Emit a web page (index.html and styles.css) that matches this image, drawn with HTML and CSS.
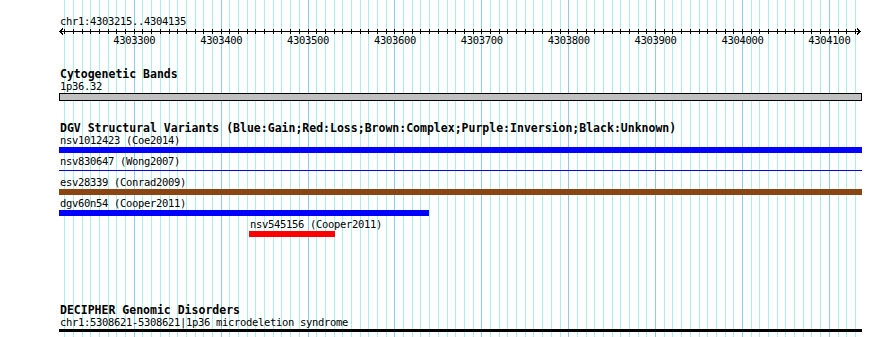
FILE: index.html
```html
<!DOCTYPE html>
<html lang="en">
<head>
<meta charset="utf-8">
<title>Genome browser</title>
<link rel="stylesheet" href="styles.css">
</head>
<body>
<div class="browser">
  <div class="grid" id="grid"></div>

  <section class="ruler">
    <div class="pos">chr1:4303215..4304135</div>
    <svg class="axis" id="axis" width="803" height="8" viewBox="0 0 803 8">
      <path class="axis-line" d="M1 4.5H801M4 1.5L1 4.5L4 7.5M798 1.5L801 4.5L798 7.5"/>
      <path class="axis-ticks" id="ticks" d=""/>
    </svg>
    <div class="ticklabels" id="ticklabels"></div>
  </section>

  <section class="track cyto">
    <h2 class="track-title">Cytogenetic Bands</h2>
    <div class="feat-label">1p36.32</div>
    <div class="band"></div>
  </section>

  <section class="track dgv">
    <h2 class="track-title">DGV Structural Variants (Blue:Gain;Red:Loss;Brown:Complex;Purple:Inversion;Black:Unknown)</h2>
    <div class="item">
      <div class="feat-label">nsv1012423 (Coe2014)</div>
      <div class="bar-row"><div class="bar gain full"></div></div>
    </div>
    <div class="item">
      <div class="feat-label">nsv830647 (Wong2007)</div>
      <div class="bar-row"><div class="bar gain full thin"></div></div>
    </div>
    <div class="item">
      <div class="feat-label">esv28339 (Conrad2009)</div>
      <div class="bar-row"><div class="bar complex full"></div></div>
    </div>
    <div class="item">
      <div class="feat-label">dgv60n54 (Cooper2011)</div>
      <div class="bar-row"><div class="bar gain" style="width:370px"></div></div>
    </div>
    <div class="item" style="margin-left:190px">
      <div class="feat-label">nsv545156 (Cooper2011)</div>
      <div class="bar-row"><div class="bar loss" style="width:86px"></div></div>
    </div>
  </section>

  <section class="track decipher">
    <h2 class="track-title">DECIPHER Genomic Disorders</h2>
    <div class="feat-label">chr1:5308621-5308621|1p36 microdeletion syndrome</div>
    <div class="bar disorder full"></div>
  </section>
</div>
<script src="script.js"></script>
</body>
</html>
```

FILE: styles.css
```css
html, body {
  margin: 0;
  padding: 0;
  background: #ffffff;
}

.browser {
  position: relative;
  width: 890px;
  height: 337px;
  overflow: hidden;
  font-family: "DejaVu Sans Mono", "Liberation Mono", monospace;
  font-size: 10.5px;
  letter-spacing: -0.32px;
  color: #000000;
}

.grid {
  position: absolute;
  top: 0;
  left: 0;
  right: 0;
  bottom: 0;
  z-index: 0;
}

.gl {
  position: absolute;
  top: 0;
  bottom: 0;
  width: 1px;
  background: #aaeeee;
}

.gl.major {
  background: #88ccee;
}

section {
  position: relative;
  z-index: 1;
  margin-left: 59px;
  width: 803px;
}

/* ruler */
.ruler {
  padding-top: 16px;
}

.pos {
  height: 11px;
  line-height: 11px;
  padding-left: 1px;
  white-space: nowrap;
}

.axis {
  display: block;
}

.axis-line,
.axis-ticks {
  fill: none;
  stroke: #000000;
  stroke-width: 1;
  shape-rendering: crispEdges;
}

.ticklabels {
  position: relative;
  height: 11px;
  line-height: 11px;
}

.ticklabels span {
  position: absolute;
  top: 0;
  transform: translateX(-50%);
  white-space: nowrap;
}

/* tracks */
.track-title {
  margin: 0;
  padding-left: 1px;
  font-size: 11.5px;
  font-weight: bold;
  letter-spacing: 0;
  line-height: 13px;
  height: 13px;
  white-space: nowrap;
}

.feat-label {
  height: 11px;
  line-height: 11px;
  padding-left: 1px;
  white-space: nowrap;
}

.cyto {
  margin-top: 22px;
}

.band {
  box-sizing: border-box;
  margin-top: 1px;
  height: 8px;
  border: 1px solid #000000;
  background: #c0c0c0;
}

.dgv {
  margin-top: 21px;
}

.bar-row {
  box-sizing: border-box;
  height: 10px;
  padding-top: 1px;
}

.bar {
  height: 6px;
}

.bar.full {
  width: 803px;
}

.bar.thin {
  height: 1px;
  margin-top: 2px;
}

.bar.gain {
  background: #0000ff;
}

.bar.loss {
  background: #ff0000;
}

.bar.complex {
  background: #8b4513;
}

.decipher {
  margin-top: 64px;
}

.bar.disorder {
  margin-top: 1px;
  height: 3px;
  background: #000000;
}
```

FILE: script.js
```js
(function () {
  var START = 4303215;
  var END = 4304135;
  var X0 = 60.4;       // pixel of window start
  var PX = 0.8689;     // pixels per base
  var ORIGIN = 59;     // left edge of track area

  var grid = document.getElementById('grid');
  var ticks = document.getElementById('ticks');
  var labels = document.getElementById('ticklabels');
  var d = '';

  for (var bp = 4303220; bp <= END; bp += 10) {
    var x = X0 + (bp - START) * PX;
    var px = Math.floor(x);
    var major = bp % 100 === 0;

    var line = document.createElement('div');
    line.className = major ? 'gl major' : 'gl';
    line.style.left = px + 'px';
    grid.appendChild(line);

    d += 'M' + (px - ORIGIN + 0.5) + ' 2V7';

    if (major) {
      var s = document.createElement('span');
      s.textContent = String(bp);
      s.style.left = (x - ORIGIN) + 'px';
      labels.appendChild(s);
    }
  }
  ticks.setAttribute('d', d);
})();
```
